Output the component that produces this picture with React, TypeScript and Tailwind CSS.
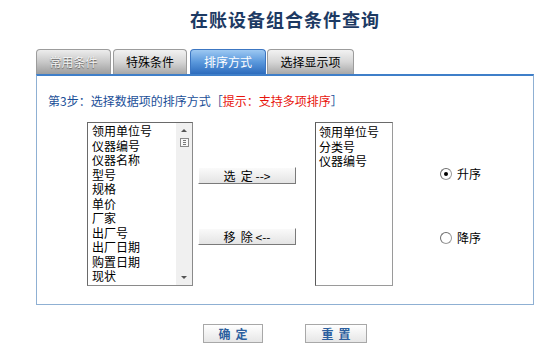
import React from "react";

const leftItems = [
  "领用单位号",
  "仪器编号",
  "仪器名称",
  "型号",
  "规格",
  "单价",
  "厂家",
  "出厂号",
  "出厂日期",
  "购置日期",
  "现状",
];
const rightItems = ["领用单位号", "分类号", "仪器编号"];

const Radio = ({ checked, label }: { checked?: boolean; label: string }) => (
  <div className="flex items-center gap-[5px] h-[16px]">
    <div className="w-[12px] h-[12px] rounded-full border border-[#9a9a9a] border-l-[#6e6e6e] border-t-[#6e6e6e] bg-white flex items-center justify-center">
      {checked && <div className="w-[4px] h-[4px] rounded-full bg-black" />}
    </div>
    <span className="text-[12px] leading-[16px] text-black">{label}</span>
  </div>
);

const MoveButton = ({ label }: { label: string }) => (
  <div className="w-[98px] h-[17px] flex items-center justify-center bg-gradient-to-b from-[#fafafa] to-[#e4e4e4] border border-t-white border-l-white border-r-[#7a7a7a] border-b-[#7a7a7a] text-[12px] leading-[15px] text-black whitespace-pre">
    {label}
  </div>
);

const App = () => {
  return (
    <div className="w-[554px] h-[352px] bg-white font-['Noto_Sans_CJK_SC',sans-serif] overflow-hidden">
      <div className="ml-[36px] w-[498px] pt-[9px] h-[49px] text-center">
        <h1 className="text-[18px] leading-[21px] font-bold text-[#1d3a63] tracking-[1px]">
          在账设备组合条件查询
        </h1>
      </div>

      <div className="flex items-end ml-[36px] h-[25px] text-[12px]">
        <div className="w-[75px] h-[25px] flex items-center justify-center rounded-t-[4px] border border-b-0 border-[#9c9c9c] bg-gradient-to-b from-[#ededed] via-[#c8c8c8] to-[#9e9e9e] text-[#f2f2f2] [text-shadow:0_1px_1px_#5a5a5a]">
          常用条件
        </div>
        <div className="ml-[2px] w-[74px] h-[25px] flex items-center justify-center rounded-t-[4px] border border-b-0 border-[#9c9c9c] bg-gradient-to-b from-[#f2f2f2] via-[#d6d6d6] to-[#a8a8a8] text-black">
          特殊条件
        </div>
        <div className="ml-[3px] w-[76px] h-[25px] flex items-center justify-center rounded-t-[4px] border border-b-0 border-[#3c76c2] bg-gradient-to-b from-[#9cc8f2] via-[#5a98dc] to-[#2d6cbd] text-white">
          排序方式
        </div>
        <div className="ml-[1px] w-[87px] h-[25px] flex items-center justify-center rounded-t-[4px] border border-b-0 border-[#9c9c9c] bg-gradient-to-b from-[#f2f2f2] via-[#d6d6d6] to-[#a8a8a8] text-black">
          选择显示项
        </div>
      </div>

      <div className="ml-[36px] w-[498px] h-[231px] border border-[#8fb0d3] border-t-2 border-t-[#3f7fc9] bg-white">
        <div className="pl-[11px] pt-[17px] text-[12px] leading-[16px] text-[#1b4f98]">
          第3步：选择数据项的排序方式［<span className="text-[#e8140c]">提示：支持多项排序</span>］
        </div>

        <div className="flex mt-[13px] pl-[50px]">
          <div className="w-[106px] h-[164px] border border-[#8a8a8a] border-t-[#6a6a6a] border-l-[#6a6a6a] bg-white flex">
            <div className="flex-1 pl-[4px] pt-[1px] overflow-hidden">
              {leftItems.map((item) => (
                <div key={item} className="text-[12px] leading-[14.5px] h-[14.5px] text-black whitespace-nowrap">
                  {item}
                </div>
              ))}
            </div>
            <div className="w-[16px] bg-[#f0f0f0] flex flex-col items-center justify-between py-[6px]">
              <div className="flex flex-col items-center gap-[6px]">
                <div className="w-0 h-0 border-l-[3px] border-r-[3px] border-b-[3px] border-l-transparent border-r-transparent border-b-[#555]" />
                <div className="w-[9px] h-[9px] border border-[#8a8a8a] bg-[#f8f8f8] flex flex-col justify-center gap-[1px] px-[2px]">
                  <div className="h-px bg-[#777]" />
                  <div className="h-px bg-[#777]" />
                  <div className="h-px bg-[#777]" />
                </div>
              </div>
              <div className="w-0 h-0 border-l-[3px] border-r-[3px] border-t-[3px] border-l-transparent border-r-transparent border-t-[#555]" />
            </div>
          </div>

          <div className="ml-[5px] flex flex-col pt-[45px] gap-[44px]">
            <MoveButton label={"选  定 -->"} />
            <MoveButton label={"移  除 <--"} />
          </div>

          <div className="ml-[19px] w-[78px] h-[164px] border border-[#9a9a9a] border-t-[#6a6a6a] border-l-[#5a5a5a] bg-white pl-[3px] pt-[2px]">
            {rightItems.map((item) => (
              <div key={item} className="text-[12px] leading-[14.5px] h-[14.5px] text-black whitespace-nowrap">
                {item}
              </div>
            ))}
          </div>

          <div className="ml-[47px] flex flex-col pt-[44px] gap-[48px]">
            <Radio checked label="升序" />
            <Radio label="降序" />
          </div>
        </div>
      </div>

      <div className="flex ml-[203px] mt-[19px] gap-[42px]">
        <div className="w-[60px] h-[19px] flex items-center justify-center border border-[#a8a8a8] bg-gradient-to-b from-white to-[#e6e6e6] text-[12px] font-bold text-[#2c5f9e] tracking-[5px] pl-[5px]">
          确定
        </div>
        <div className="w-[62px] h-[19px] flex items-center justify-center border border-[#a8a8a8] bg-gradient-to-b from-white to-[#e6e6e6] text-[12px] font-bold text-[#2c5f9e] tracking-[5px] pl-[5px]">
          重置
        </div>
      </div>
    </div>
  );
};

export default App;
